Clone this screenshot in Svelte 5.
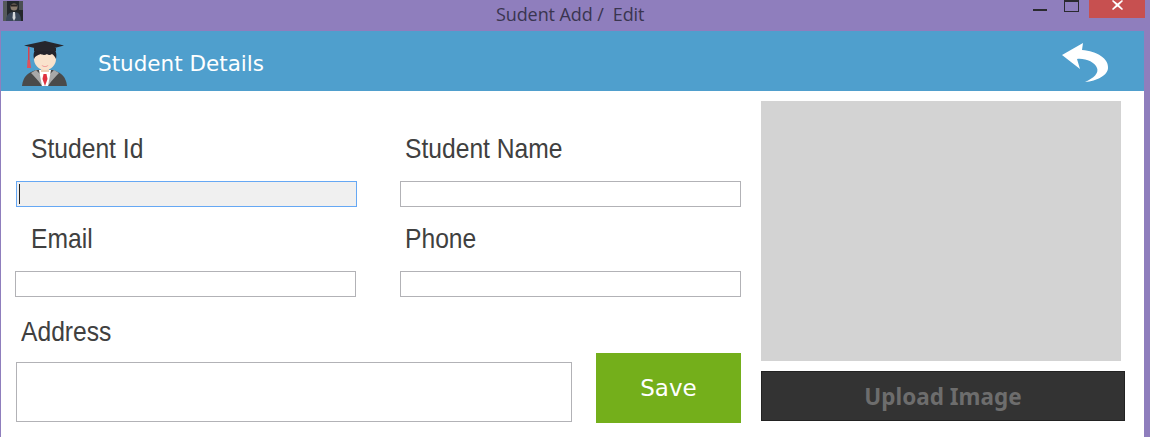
<script>
    let studentId = "";
    let studentName = "";
    let email = "";
    let phone = "";
    let address = "";
</script>

<div class="window">
    <div class="titlebar">
        <svg class="appicon" width="20" height="20" viewBox="0 0 20 20">
            <rect width="20" height="20" fill="#23272b" />
            <rect x="0" y="0" width="4" height="20" fill="#55595a" />
            <rect x="16" y="0" width="4" height="9" fill="#4a4f52" />
            <circle cx="11" cy="6" r="3.500" fill="#8a7a6c" />
            <path d="M8 3.500h6v2H8z" fill="#2b2422" />
            <path d="M3 20c0-6 3-9 8-9s7 3 7 9z" fill="#3a4658" />
            <path d="M10 11h2l.5 6-1.500 3-1.500-3z" fill="#d5d8dc" />
        </svg>
        <span class="title">Sudent Add /&nbsp; Edit</span>
        <div class="controls">
            <span class="minimize"></span>
            <span class="maximize"></span>
            <span class="close">
                <svg width="11" height="10" viewBox="0 0 11 10">
                    <path d="M1 0l4.500 3.600L10 0l1 1-4 4 4 4-1 1-4.500-3.600L1 10 0 9l4-4-4-4z" fill="#fff" />
                </svg>
            </span>
        </div>
    </div>

    <div class="content">
        <header>
            <svg class="avatar" width="50" height="48" viewBox="0 0 50 48">
                <path d="M1 46c1-9 5-13 14-16h17c9 3 13 7 14 16z" fill="#4a4a4a" />
                <path d="M15 30l9 9 9-9 5 3c-3 3-7 7-11 13h-6c-4-6-8-10-11-13z" fill="#a8a8a8" />
                <path d="M18 30h12l-3 16h-6z" fill="#fff" />
                <path d="M22.500 34h3l1 5-2.500 7-2.500-7z" fill="#e0313f" />
                <rect x="20" y="24" width="8" height="8" fill="#efd0b6" />
                <ellipse cx="24" cy="19" rx="11" ry="11" fill="#f9e2cc" />
                <path d="M13 19c-1-5 0-8 2-10h18c2 2 3 5 2 10-1-2-2-4-4-5-2 1.500-4 1-5 0-2 1.500-5 1-6 0-3 1-6 2-7 5z" fill="#23232a" />
                <path d="M20.500 25c2 1.500 5 1.500 7 0-1 2.500-6 2.500-7 0z" fill="#ee8f8f" />
                <path d="M3 5.500L24 1l19 4.500-19 5z" fill="#26262c" />
                <path d="M13 8h22v3H13z" fill="#26262c" />
                <rect x="7" y="7" width="1.500" height="14" fill="#d9434f" />
                <path d="M6.500 20h2.500l1 8H6z" fill="#e0525c" />
            </svg>
            <h1>Student Details</h1>
            <svg class="back" width="48" height="40" viewBox="0 0 48 40">
                <path d="M0 12L21 0l-1 7C35 8 47 16 46 25c0 7-11 13-23 14 9-4 14-9 12-14-2-6-12-10-20-9l3 10z" fill="#fff" />
            </svg>
        </header>

        <div class="body">
            <form class="form">
                <div class="field">
                    <label for="sid">Student Id</label>
                    <div class="input-wrap">
                        <input id="sid" class="focused" type="text" bind:value={studentId} />
                        <span class="caret"></span>
                    </div>
                </div>
                <div class="field second">
                    <label for="sname">Student Name</label>
                    <input id="sname" type="text" bind:value={studentName} />
                </div>
                <div class="field shifted">
                    <label for="email">Email</label>
                    <input id="email" type="text" bind:value={email} />
                </div>
                <div class="field second">
                    <label for="phone">Phone</label>
                    <input id="phone" type="text" bind:value={phone} />
                </div>
                <div class="bottom">
                    <div class="address">
                        <label for="address">Address</label>
                        <textarea id="address" bind:value={address}></textarea>
                    </div>
                    <button type="button" class="save">Save</button>
                </div>
            </form>

            <aside>
                <div class="photo"></div>
                <button type="button" class="upload">Upload Image</button>
            </aside>
        </div>
    </div>
</div>

<style>
    :global(body) {
        margin: 0;
    }

    .window {
        width: 1150px;
        height: 437px;
        background: #8f7ebd;
        overflow: hidden;
        box-sizing: border-box;
        padding: 0 6px 0 1px;
    }

    .titlebar {
        height: 31px;
        display: flex;
        align-items: flex-start;
        margin-right: -6px;
        margin-left: -1px;
        position: relative;
    }

    .appicon {
        margin: 1px 0 0 3px;
    }

    .title {
        position: absolute;
        left: 496px;
        top: 3px;
        font: 18px/22px "Open Sans", "Liberation Sans", sans-serif;
        letter-spacing: -0.1px;
        color: #3a3550;
    }

    .controls {
        margin-left: auto;
        display: flex;
        align-items: flex-start;
        margin-right: 5px;
    }

    .minimize {
        width: 14px;
        height: 2px;
        background: #2a2a30;
        margin: 9px 17px 0 0;
    }

    .maximize {
        width: 13px;
        height: 9px;
        border: 1px solid #2a2a30;
        border-top-width: 2px;
        margin-right: 10px;
    }

    .close {
        width: 56px;
        height: 18px;
        background: #c75050;
        display: flex;
        align-items: center;
        justify-content: center;
        padding-bottom: 8px;
        box-sizing: border-box;
    }

    .content {
        height: 406px;
        background: #fff;
    }

    header {
        height: 60px;
        background: #4f9fcd;
        display: flex;
        align-items: center;
        padding: 0 34px 0 20px;
    }

    .avatar {
        margin-top: 6px;
    }

    h1 {
        margin: 4px 0 0 27px;
        font: 400 21.5px "DejaVu Sans", Verdana, sans-serif;
        color: #fff;
    }

    .back {
        margin-left: auto;
        margin-top: 4px;
    }

    .body {
        display: flex;
        padding: 10px 0 0 15px;
    }

    .form {
        width: 726px;
        display: grid;
        grid-template-columns: 341px 341px;
        column-gap: 43px;
        align-content: start;
        padding-top: 28px;
        box-sizing: border-box;
    }

    .field {
        display: flex;
        flex-direction: column;
        height: 90px;
        padding-top: 4px;
        box-sizing: border-box;
    }

    .field label {
        margin-left: 15px;
        height: 48px;
    }

    .second label {
        margin-left: 5px;
    }

    .shifted {
        margin: 0 1px 0 -1px;
    }

    .shifted label {
        margin-left: 16px;
    }

    label {
        font: 28px/32px "Liberation Sans", Arial, sans-serif;
        color: #404040;
        display: block;
        transform: scaleX(0.88);
        transform-origin: left center;
    }

    input {
        width: 100%;
        height: 26px;
        box-sizing: border-box;
        border: 1px solid #b2b2b6;
        background: #fff;
        outline: none;
        padding: 0;
        margin: 0;
        display: block;
    }

    input.focused {
        border-color: #66a8f4;
        background: #f0f0f0;
    }

    .input-wrap {
        position: relative;
    }

    .caret {
        position: absolute;
        left: 3px;
        top: 3px;
        width: 1px;
        height: 20px;
        background: #222;
    }

    .bottom {
        grid-column: 1 / 3;
        display: flex;
        align-items: flex-end;
        justify-content: space-between;
        margin-top: 7px;
        height: 106px;
    }

    .address label {
        margin-left: 5px;
        height: 46px;
    }

    textarea {
        display: block;
        width: 556px;
        height: 60px;
        box-sizing: border-box;
        border: 1px solid #b2b2b6;
        outline: none;
        resize: none;
        margin: 0;
        padding: 0;
    }

    .save {
        width: 145px;
        height: 70px;
        margin-bottom: -1px;
        border: none;
        background: #74af1b;
        color: #fff;
        font: 23px "DejaVu Sans", Verdana, sans-serif;
    }

    aside {
        margin-left: 19px;
        display: flex;
        flex-direction: column;
        gap: 10px;
    }

    .photo {
        width: 360px;
        height: 260px;
        background: #d3d3d3;
    }

    .upload {
        width: 364px;
        height: 50px;
        background: #333;
        border: 1px solid #222;
        color: #6d6d6d;
        font: 700 22.5px "Noto Sans", "Open Sans", sans-serif;
        padding: 0;
    }
</style>
